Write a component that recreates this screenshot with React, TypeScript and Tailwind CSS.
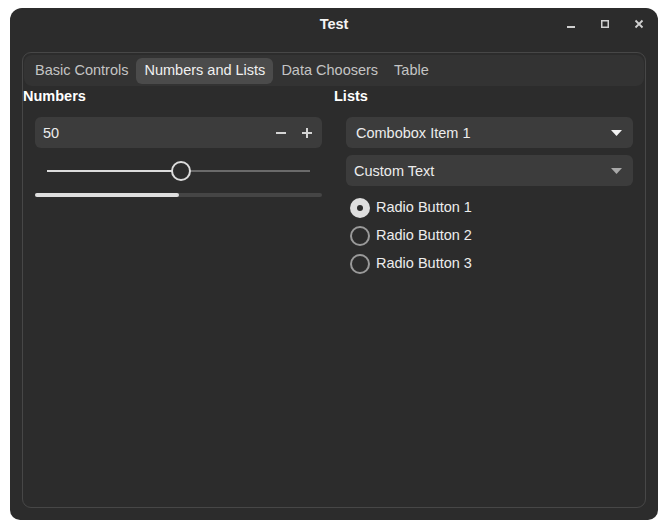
import React, { useState } from 'react';

const tabs = ['Basic Controls', 'Numbers and Lists', 'Data Choosers', 'Table'];

const Arrow = ({ dim }: { dim?: boolean }) => (
  <svg width="11" height="6" viewBox="0 0 11 6">
    <path d="M0 0 L11 0 L5.5 6 Z" fill={dim ? '#a8a8a8' : '#f2f2f2'} />
  </svg>
);

const Radio = ({ checked, label }: { checked?: boolean; label: string }) => (
  <div className="flex items-center h-[28px] pl-[4px]">
    {checked ? (
      <span className="w-[20px] h-[20px] rounded-full bg-[#dedede] flex items-center justify-center">
        <span className="w-[6px] h-[6px] rounded-full bg-[#2c2c2c]" />
      </span>
    ) : (
      <span className="w-[20px] h-[20px] rounded-full border-2 border-[#9a9a9a]" />
    )}
    <span className="ml-[6px] text-[14.5px] text-[#ececec]">{label}</span>
  </div>
);

export default function App() {
  const [tab, setTab] = useState(1);
  const [radio] = useState(0);

  return (
    <div className="bg-white h-[531px] pt-[8px] pl-[10px]" style={{ fontFamily: '"Liberation Sans", Arial, sans-serif' }}>
      <div className="w-[648px] h-[512px] bg-[#2c2c2c] rounded-t-[12px] rounded-b-[10px] flex flex-col">
        {/* Title bar */}
        <div className="h-[32px] relative flex items-center justify-center">
          <span className="text-[14.5px] font-bold text-[#f4f4f4] pt-[2px]">Test</span>
          <div className="absolute right-[14px] top-[11px] flex items-center gap-[24px]">
            <svg width="10" height="10" viewBox="0 0 10 10">
              <rect x="1" y="7" width="8" height="2" fill="#d0d0d0" />
            </svg>
            <svg width="10" height="10" viewBox="0 0 10 10">
              <rect x="1.75" y="1.75" width="6.5" height="6.5" fill="none" stroke="#d0d0d0" strokeWidth="1.5" />
            </svg>
            <svg width="10" height="10" viewBox="0 0 10 10">
              <path d="M1.5 1.5 L8.5 8.5 M8.5 1.5 L1.5 8.5" stroke="#d0d0d0" strokeWidth="1.8" />
            </svg>
          </div>
        </div>

        {/* Content */}
        <div className="flex-1 pt-[12px] px-[12px] pb-[12px]">
          <div className="h-full border border-[#474747] rounded-[9px] flex flex-col">
            <div className="mx-[1px] mt-[2px] h-[31px] bg-[#333333] rounded-[8px] flex items-center pl-[3px]">
              {tabs.map((t, i) => (
                <button
                  key={t}
                  onClick={() => setTab(i)}
                  className={`h-[26px] px-[8px] rounded-[6px] text-[14.5px] ${
                    tab === i ? 'bg-[#4b4b4b] text-[#f0f0f0]' : 'text-[#c4c4c4]'
                  }`}
                >
                  {t}
                </button>
              ))}
            </div>

            <div className="grid grid-cols-2">
              {/* Numbers */}
              <div>
                <div className="h-[20px] text-[14.5px] font-bold text-white leading-[20px]">Numbers</div>
                <div className="px-[12px] pt-[11px]">
                  <div className="h-[31px] bg-[#3c3c3c] rounded-[6px] flex items-center pl-[8px] pr-[9px]">
                    <span className="flex-1 text-[14.5px] text-[#ececec] pt-[2px]">50</span>
                    <svg width="12" height="12" viewBox="0 0 12 12" className="mr-[14px]">
                      <rect x="1" y="5" width="10" height="2" fill="#d4d4d4" />
                    </svg>
                    <svg width="12" height="12" viewBox="0 0 12 12">
                      <rect x="1" y="5" width="10" height="2" fill="#d4d4d4" />
                      <rect x="5" y="1" width="2" height="10" fill="#d4d4d4" />
                    </svg>
                  </div>
                  <div className="h-[46px] px-[12px] flex items-center">
                    <div className="flex-1 h-[2px] bg-[#6a6a6a] relative">
                      <div className="absolute left-0 top-0 h-[2px] w-[134px] bg-[#dcdcdc]" />
                      <div className="absolute left-[124px] top-[-9px] w-[20px] h-[20px] rounded-full border-2 border-[#dcdcdc] bg-[#2c2c2c]" />
                    </div>
                  </div>
                  <div className="h-[4px] rounded-full bg-[#454545] -mt-[1px]">
                    <div className="h-[4px] w-1/2 rounded-full bg-[#dedede]" />
                  </div>
                </div>
              </div>

              {/* Lists */}
              <div>
                <div className="h-[20px] text-[14.5px] font-bold text-white leading-[20px]">Lists</div>
                <div className="px-[12px] pt-[11px] flex flex-col gap-[7px]">
                  <div className="h-[31px] bg-[#3c3c3c] rounded-[6px] flex items-center pl-[10px] pr-[11px]">
                    <span className="flex-1 text-[14.5px] text-[#ececec] pt-[2px]">Combobox Item 1</span>
                    <Arrow />
                  </div>
                  <div className="h-[31px] bg-[#3c3c3c] rounded-[6px] flex items-center pl-[8px] pr-[11px]">
                    <span className="flex-1 text-[14.5px] text-[#ececec] pt-[2px]">Custom Text</span>
                    <Arrow dim />
                  </div>
                  <div className="flex flex-col mt-[1px]">
                    <Radio checked={radio === 0} label="Radio Button 1" />
                    <Radio checked={radio === 1} label="Radio Button 2" />
                    <Radio checked={radio === 2} label="Radio Button 3" />
                  </div>
                </div>
              </div>
            </div>
          </div>
        </div>
      </div>
    </div>
  );
}
